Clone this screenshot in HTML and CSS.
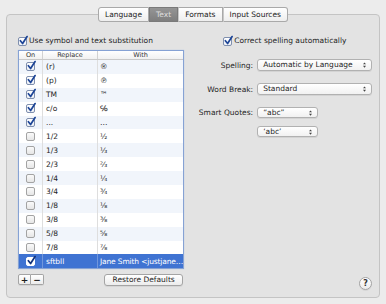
FILE: index.html
```html
<!DOCTYPE html>
<html lang="en">
<head>
    <meta charset="UTF-8">
    <meta name="viewport" content="width=device-width, initial-scale=1.0">
    <title>Language &amp; Text</title>
    <link rel="stylesheet" href="styles.css">
</head>
<body>

    <div class="prefs">
        <div class="tabs">
            <span class="tab">Language</span>
            <span class="tab active">Text</span>
            <span class="tab">Formats</span>
            <span class="tab">Input Sources</span>
        </div>

        <div class="pane">
            <div class="left">
                <label class="check-row">
                    <span class="cb on"><svg viewBox="0 0 10 10"><path d="M1.5 5.2 L4 8.3 L9 0.6"/></svg></span>
                    Use symbol and text substitution
                </label>

                <div class="table">
                    <div class="row head">
                        <span class="col-on">On</span>
                        <span class="col-rep">Replace</span>
                        <span class="col-with">With</span>
                    </div>
                    <div class="row">
                        <span class="col-on"><span class="cb on"><svg viewBox="0 0 10 10"><path d="M1.5 5.2 L4 8.3 L9 0.6"/></svg></span></span>
                        <span class="col-rep">(r)</span>
                        <span class="col-with">®</span>
                    </div>
                    <div class="row">
                        <span class="col-on"><span class="cb on"><svg viewBox="0 0 10 10"><path d="M1.5 5.2 L4 8.3 L9 0.6"/></svg></span></span>
                        <span class="col-rep">(p)</span>
                        <span class="col-with">℗</span>
                    </div>
                    <div class="row">
                        <span class="col-on"><span class="cb on"><svg viewBox="0 0 10 10"><path d="M1.5 5.2 L4 8.3 L9 0.6"/></svg></span></span>
                        <span class="col-rep">TM</span>
                        <span class="col-with">™</span>
                    </div>
                    <div class="row">
                        <span class="col-on"><span class="cb on"><svg viewBox="0 0 10 10"><path d="M1.5 5.2 L4 8.3 L9 0.6"/></svg></span></span>
                        <span class="col-rep">c/o</span>
                        <span class="col-with">℅</span>
                    </div>
                    <div class="row">
                        <span class="col-on"><span class="cb on"><svg viewBox="0 0 10 10"><path d="M1.5 5.2 L4 8.3 L9 0.6"/></svg></span></span>
                        <span class="col-rep">...</span>
                        <span class="col-with">…</span>
                    </div>
                    <div class="row">
                        <span class="col-on"><span class="cb"></span></span>
                        <span class="col-rep">1/2</span>
                        <span class="col-with">½</span>
                    </div>
                    <div class="row">
                        <span class="col-on"><span class="cb"></span></span>
                        <span class="col-rep">1/3</span>
                        <span class="col-with">⅓</span>
                    </div>
                    <div class="row">
                        <span class="col-on"><span class="cb"></span></span>
                        <span class="col-rep">2/3</span>
                        <span class="col-with">⅔</span>
                    </div>
                    <div class="row">
                        <span class="col-on"><span class="cb"></span></span>
                        <span class="col-rep">1/4</span>
                        <span class="col-with">¼</span>
                    </div>
                    <div class="row">
                        <span class="col-on"><span class="cb"></span></span>
                        <span class="col-rep">3/4</span>
                        <span class="col-with">¾</span>
                    </div>
                    <div class="row">
                        <span class="col-on"><span class="cb"></span></span>
                        <span class="col-rep">1/8</span>
                        <span class="col-with">⅛</span>
                    </div>
                    <div class="row">
                        <span class="col-on"><span class="cb"></span></span>
                        <span class="col-rep">3/8</span>
                        <span class="col-with">⅜</span>
                    </div>
                    <div class="row">
                        <span class="col-on"><span class="cb"></span></span>
                        <span class="col-rep">5/8</span>
                        <span class="col-with">⅝</span>
                    </div>
                    <div class="row">
                        <span class="col-on"><span class="cb"></span></span>
                        <span class="col-rep">7/8</span>
                        <span class="col-with">⅞</span>
                    </div>
                    <div class="row selected">
                        <span class="col-on"><span class="cb on"><svg viewBox="0 0 10 10"><path d="M1.5 5.2 L4 8.3 L9 0.6"/></svg></span></span>
                        <span class="col-rep">sftbll</span>
                        <span class="col-with">Jane Smith &lt;justjane…</span>
                    </div>
                </div>

                <div class="table-actions">
                    <div class="segment">
                        <button>+</button>
                        <button>−</button>
                    </div>
                    <button class="push">Restore Defaults</button>
                </div>
            </div>

            <div class="right">
                <label class="check-row spell-check">
                    <span class="cb on"><svg viewBox="0 0 10 10"><path d="M1.5 5.2 L4 8.3 L9 0.6"/></svg></span>
                    Correct spelling automatically
                </label>

                <div class="field">
                    <span class="field-label">Spelling:</span>
                    <span class="popup wide">Automatic by Language<svg class="arrows" viewBox="0 0 4 8"><path d="M0 3 L2 0.5 L4 3 Z M0 5 L2 7.5 L4 5 Z"/></svg></span>
                </div>
                <div class="field">
                    <span class="field-label">Word Break:</span>
                    <span class="popup wide">Standard<svg class="arrows" viewBox="0 0 4 8"><path d="M0 3 L2 0.5 L4 3 Z M0 5 L2 7.5 L4 5 Z"/></svg></span>
                </div>
                <div class="field quotes">
                    <span class="field-label">Smart Quotes:</span>
                    <span class="popup short">“abc”<svg class="arrows" viewBox="0 0 4 8"><path d="M0 3 L2 0.5 L4 3 Z M0 5 L2 7.5 L4 5 Z"/></svg></span>
                </div>
                <div class="field quotes sub">
                    <span class="field-label"></span>
                    <span class="popup short">‘abc’<svg class="arrows" viewBox="0 0 4 8"><path d="M0 3 L2 0.5 L4 3 Z M0 5 L2 7.5 L4 5 Z"/></svg></span>
                </div>

                <button class="help">?</button>
            </div>
        </div>
    </div>

</body>
</html>
```

FILE: styles.css
```css
* {
    box-sizing: border-box;
}

body {
    margin: 0;
    background-color: #ececec;
    font-family: "DejaVu Sans", "Liberation Sans", sans-serif;
    font-size: 7.5px;
    color: #1e1e1e;
}

.prefs {
    padding-top: 7px;
}

/* tab strip sits over the pane's top border */
.tabs {
    position: relative;
    z-index: 1;
    display: flex;
    justify-content: center;
    margin-bottom: -8px;
}

.tab {
    height: 15px;
    line-height: 13px;
    padding: 0 6px;
    border: 1px solid #a9a9a9;
    border-left: 1px solid #c8c8c8;
    background: linear-gradient(#ffffff, #eeeeee);
    color: #222;
}

.tab:first-child {
    border-left-color: #a9a9a9;
    border-radius: 3px 0 0 3px;
}

.tab:last-child {
    border-radius: 0 3px 3px 0;
}

.tab.active {
    background: linear-gradient(#959595, #7e7e7e);
    border-color: #7a7a7a;
    color: #dedede;
}

.pane {
    display: flex;
    height: 284px;
    margin: 0 6px;
    padding: 21px 10px 7px 11px;
    border: 1px solid #c4c4c4;
    border-radius: 4px;
    background-color: #e3e3e3;
}

.left {
    width: 167px;
    display: flex;
    flex-direction: column;
}

.check-row {
    display: flex;
    align-items: center;
    height: 10px;
    line-height: 10px;
}

.check-row .cb {
    margin-right: 2px;
}

/* checkboxes */
.cb {
    position: relative;
    display: inline-block;
    flex: none;
    width: 9px;
    height: 9px;
    border: 1px solid #a3a3a3;
    border-radius: 2px;
    background: linear-gradient(#fafafa, #e6e6e6);
}

.cb.on {
    border-color: #7f8fae;
    background: linear-gradient(#ffffff, #eef1f6);
}

.cb svg {
    position: absolute;
    left: 0;
    top: -2px;
    width: 9px;
    height: 9px;
    overflow: visible;
}

.cb svg path {
    fill: none;
    stroke: #1d4597;
    stroke-width: 1.9;
    stroke-linecap: round;
    stroke-linejoin: round;
}

/* substitution table */
.table {
    margin-top: 4px;
    border: 1px solid #86a2d4;
    background-color: #ffffff;
    box-shadow: 0 0 1px #a9c0e8;
}

.row {
    display: flex;
    height: 13.9px;
    align-items: stretch;
}

.row:nth-child(even) {
    background-color: #f1f5fb;
}

.row > span {
    display: flex;
    align-items: center;
    border-right: 1px solid #dedede;
    white-space: nowrap;
    overflow: hidden;
}

.row > span:last-child {
    border-right: none;
}

.col-on {
    width: 24px;
    justify-content: center;
}

.col-rep {
    width: 55px;
    padding-left: 3px;
}

.col-with {
    flex: 1;
    padding-left: 2px;
}

.row.head {
    height: 9px;
    font-size: 6.5px;
    color: #333;
    background: linear-gradient(#ffffff, #f1f1f1);
    border-bottom: 1px solid #c9c9c9;
}

.row.head > span {
    justify-content: center;
    padding: 0;
    border-right-color: #d2d2d2;
}

.row.selected {
    background-color: #3f73d2;
    color: #ffffff;
}

.row.selected > span {
    border-right-color: #7197dc;
}

.row.selected .col-with {
    letter-spacing: -0.15px;
}

.row.selected .cb {
    border-color: #ffffff;
    background: #ffffff;
}

.row.selected .cb svg path {
    stroke: #12327a;
}

.table-actions {
    display: flex;
    justify-content: space-between;
    margin-top: 5px;
    padding-right: 1px;
}

.segment {
    display: flex;
}

.segment button,
.push,
.help {
    font-family: inherit;
    color: #1e1e1e;
    border: 1px solid #a4a4a4;
    background: linear-gradient(#ffffff, #ececec);
    box-shadow: 0 1px 0 rgba(0, 0, 0, 0.06);
    padding: 0;
    cursor: pointer;
}

.segment button {
    width: 13px;
    height: 11px;
    font-size: 9px;
    font-weight: bold;
    line-height: 8px;
}

.segment button:first-child {
    border-radius: 2px 0 0 2px;
}

.segment button:last-child {
    border-left: none;
    border-radius: 0 2px 2px 0;
}

.push {
    width: 79px;
    height: 12px;
    font-size: 7.5px;
    line-height: 10px;
    border-radius: 3px;
}

/* right column */
.right {
    flex: 1;
    display: flex;
    flex-direction: column;
    padding-left: 7px;
}

.spell-check {
    margin-left: 32px;
}

.field {
    display: flex;
    align-items: center;
    margin-top: 13px;
}

.field + .field {
    margin-top: 12px;
}

.field.sub {
    margin-top: 8px;
}

.field-label {
    width: 62px;
    margin-right: 4px;
    text-align: right;
}

.popup {
    position: relative;
    height: 12px;
    line-height: 10px;
    padding-left: 5px;
    border: 1px solid #b1b1b1;
    border-radius: 3px;
    background: linear-gradient(#ffffff, #f1f1f1);
    box-shadow: 0 1px 0 rgba(0, 0, 0, 0.07);
}

.popup.wide {
    width: 115px;
}

.popup.short {
    width: 61px;
    height: 11px;
    line-height: 9px;
}

.arrows {
    position: absolute;
    right: 5px;
    top: 50%;
    width: 3px;
    height: 6px;
    margin-top: -3px;
    fill: #444;
}

.help {
    align-self: flex-end;
    margin-top: auto;
    width: 13px;
    height: 13px;
    border-radius: 50%;
    font-size: 8px;
    font-weight: bold;
    line-height: 11px;
    color: #333;
}
```
